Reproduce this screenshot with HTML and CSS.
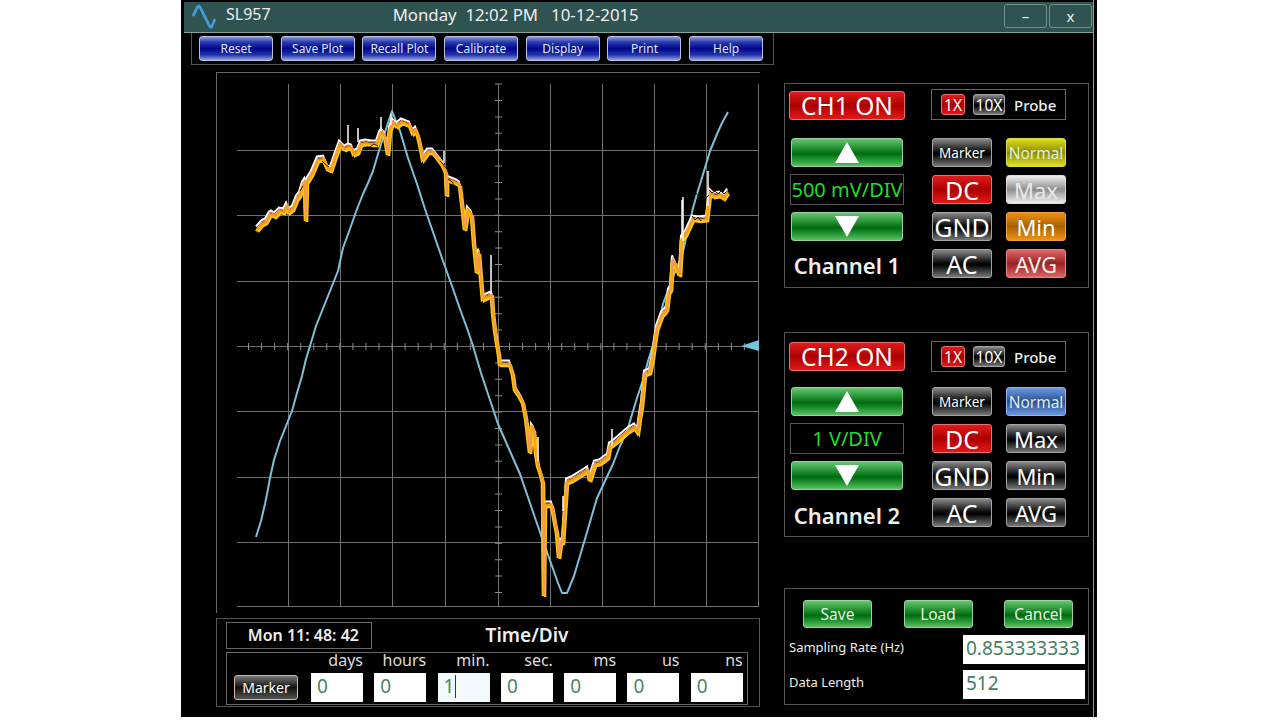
FILE: index.html
```html
<!DOCTYPE html>
<html lang="en">
<head>
    <meta charset="UTF-8">
    <meta name="viewport" content="width=device-width, initial-scale=1.0">
    <title>SL957</title>
    <link rel="stylesheet" href="styles.css">
</head>
<body>

    <div class="window">
        <div class="titlebar">
            <svg class="logo" width="24" height="28" viewBox="0 0 24 28">
                <path d="M1 14 L5.5 5 Q6.5 3 8 5 L17 23 Q19 27 20 24 L23 17" fill="none" stroke="#3f9bd5" stroke-width="2.8"/>
            </svg>
            <span class="app-name">SL957</span>
            <span class="clock">Monday&nbsp; 12:02 PM &nbsp; 10-12-2015</span>
            <div class="window-buttons">
                <div class="window-button">–</div>
                <div class="window-button">x</div>
            </div>
        </div>

        <div class="content">
            <div class="left">
                <div class="toolbar">
                    <div class="btn btn-blue">Reset</div>
                    <div class="btn btn-blue">Save Plot</div>
                    <div class="btn btn-blue">Recall Plot</div>
                    <div class="btn btn-blue">Calibrate</div>
                    <div class="btn btn-blue">Display</div>
                    <div class="btn btn-blue">Print</div>
                    <div class="btn btn-blue">Help</div>
                </div>

                <svg class="plot" width="544" height="541" viewBox="216 71 544 541">
                    <defs>
                        <polyline id="trace" points="257,228 262,222 266,220 270,213 272,212 275,214 280,209 284,210 287,204 289,210 293,207 297,197 300,193 303,183 305,180 306,218 307,180 312,172 318,158 324,157 328,167 331,168 335,156 340,142 345,147 349,145 352,146 354,152 358,150 361,142 366,141 372,142 377,142 380,133 382,130 385,134 388,152 390,128 393,120 397,124 402,120 407,122 410,123 413,131 416,128 418,133 421,146 423,157 428,150 433,150 437,155 443,163 446,170 447,193 447,177 452,179 457,181 460,183 462,200 465,227 468,208 472,213 474,240 477,270 479,250 481,275 483,297 487,295 492,293 493,310 495,327 497,340 499,352 500,362 510,362 513,372 515,387 519,393 523,400 526,415 530,450 532,425 534,428 536,450 538,463 541,472 543,480 544,593 545,503 547,503 552,503 555,520 557,530 559,555 561,540 563,540 565,510 567,480 572,478 580,473 585,470 588,468 590,478 595,462 600,461 608,455 610,444 612,443 618,438 627,430 635,425 638,430 640,415 642,403 645,372 650,370 653,355 655,340 657,327 662,313 665,310 667,307 669,290 671,287 673,257 676,264 680,273 682,237 686,232 693,217 700,218 707,217 709,200 710,190 714,194 720,193 724,196 728,190"/>
                    </defs>
                    <rect class="frame" x="216.5" y="71.5" width="544" height="545"/>
                    <path class="grid" d="M288.5 83V605M340.5 83V605M392.5 83V605M445.5 83V605M550.5 83V605M602.5 83V605M654.5 83V605M706.5 83V605M758.5 83V605"/>
                    <path class="grid" d="M237 149.5H759M237 214.5H759M237 280.5H759M237 345.5H759M237 410.5H759M237 476.5H759M237 541.5H759M237 605.5H759"/>
                    <path class="grid" d="M498.5 83V605"/>
                    <line class="ticks-x" x1="248" y1="345.5" x2="759" y2="345.5"/>
                    <line class="ticks-y" x1="498.5" y1="82.6" x2="498.5" y2="605"/>

                    <polyline class="trace-blue" points="256,536 261,520 265,503 268,488 270,477 274,459 280,440 286,425 292,410 297,392 302,375 306,358 310,345 316,325 322,310 330,290 338,270 343,247 351,225 357,208 363,193 368,182 373,170 378,153 383,137 388,122 392,110 400,130 408,157 417,183 425,208 434,234 443,260 452,285 460,308 468,330 473,345 481,372 487,390 493,408 498,423 509,448 520,473 532,508 543,540 552,565 558,582 562,592 567,592 574,575 585,538 597,497 605,480 613,463 620,445 627,430 637,397 644,376 648,360 655,338 663,303 672,278 682,255 693,207 697,193 704,170 710,150 717,133 722,122 728,111"/>
                    <polygon class="marker" points="741,345 759,339 759,350"/>

                    <use href="#trace" class="trace-white" x="-1" y="-2.5"/>
                    <use href="#trace" class="trace-yellow" x="1" y="3"/>
                    <use href="#trace" class="trace-yellow" x="-1" y="2"/>
                    <use href="#trace" class="trace-orange" y="1"/>
                    <use href="#trace" class="trace-salmon" y="-1"/>
                    <path class="spikes" d="M348 142V124M358 141V127M381 130V116M391 124V113M444 162V150M491 293V254M538 460V436M683 240V196M682 237V199M708 205V170M563 510V495M612 445V428"/>
                    <path class="trace-dark" d="M696 192l3 4 3-3 4 4 3-3M709 189l3 3 3-2 3 3 3-3 3 3 2-2M692 215l3 4 3-3 3 4M440 160l3 3 3 4M448 178l4 3 3 4M300 190l3-5M370 146l4-3 4 2M322 160l4 4 3 2"/>
                </svg>

                <div class="time-panel">
                    <div class="time-top">
                        <div class="time-now">Mon 11: 48: 42</div>
                        <div class="time-title">Time/Div</div>
                    </div>
                    <div class="time-grid">
                        <div></div>
                        <div class="unit">days</div>
                        <div class="unit">hours</div>
                        <div class="unit">min.</div>
                        <div class="unit">sec.</div>
                        <div class="unit">ms</div>
                        <div class="unit">us</div>
                        <div class="unit">ns</div>
                        <div class="btn btn-marker">Marker</div>
                        <div class="field">0</div>
                        <div class="field">0</div>
                        <div class="field field-active">1<span class="caret"></span></div>
                        <div class="field">0</div>
                        <div class="field">0</div>
                        <div class="field">0</div>
                        <div class="field">0</div>
                    </div>
                </div>
            </div>

            <div class="side">
                <div class="panel">
                    <div class="channel">
                        <div class="btn btn-red btn-channel">CH1 ON</div>
                        <div class="btn btn-green btn-step"><span class="arrow-up"></span></div>
                        <div class="division">500 mV/DIV</div>
                        <div class="btn btn-green btn-step"><span class="arrow-down"></span></div>
                        <div class="channel-name">Channel 1</div>
                    </div>
                    <div class="controls">
                        <div class="probe">
                            <div class="btn btn-red btn-probe">1X</div>
                            <div class="btn btn-dark btn-probe btn-probe-wide">10X</div>
                            <span class="probe-label">Probe</span>
                        </div>
                        <div class="modes">
                            <div class="btn btn-dark btn-small">Marker</div>
                            <div class="btn btn-yellow btn-normal">Normal</div>
                            <div class="btn btn-red btn-large">DC</div>
                            <div class="btn btn-white">Max</div>
                            <div class="btn btn-dark btn-large">GND</div>
                            <div class="btn btn-orange">Min</div>
                            <div class="btn btn-dark btn-large">AC</div>
                            <div class="btn btn-rose">AVG</div>
                        </div>
                    </div>
                </div>

                <div class="panel panel-two">
                    <div class="channel">
                        <div class="btn btn-red btn-channel">CH2 ON</div>
                        <div class="btn btn-green btn-step"><span class="arrow-up"></span></div>
                        <div class="division">1 V/DIV</div>
                        <div class="btn btn-green btn-step"><span class="arrow-down"></span></div>
                        <div class="channel-name">Channel 2</div>
                    </div>
                    <div class="controls">
                        <div class="probe">
                            <div class="btn btn-red btn-probe">1X</div>
                            <div class="btn btn-dark btn-probe btn-probe-wide">10X</div>
                            <span class="probe-label">Probe</span>
                        </div>
                        <div class="modes">
                            <div class="btn btn-dark btn-small">Marker</div>
                            <div class="btn btn-sky btn-normal">Normal</div>
                            <div class="btn btn-red btn-large">DC</div>
                            <div class="btn btn-dark">Max</div>
                            <div class="btn btn-dark btn-large">GND</div>
                            <div class="btn btn-dark">Min</div>
                            <div class="btn btn-dark btn-large">AC</div>
                            <div class="btn btn-dark">AVG</div>
                        </div>
                    </div>
                </div>

                <div class="panel panel-settings">
                    <div class="settings-buttons">
                        <div class="btn btn-green btn-setting">Save</div>
                        <div class="btn btn-green btn-setting">Load</div>
                        <div class="btn btn-green btn-setting">Cancel</div>
                    </div>
                    <div class="setting-row">
                        <span>Sampling Rate (Hz)</span>
                        <div class="field field-wide">0.853333333</div>
                    </div>
                    <div class="setting-row">
                        <span>Data Length</span>
                        <div class="field field-wide">512</div>
                    </div>
                </div>
            </div>
        </div>
    </div>

</body>
</html>
```

FILE: styles.css
```css
body {
    font-family: "Noto Sans", "Open Sans", sans-serif;
    margin: 0;
    background: #fff;
    color: #eee;
}
.window {
    width: 916px;
    height: 717px;
    margin-left: 181px;
    background: #000;
    padding-top: 2px;
    box-sizing: border-box;
    box-shadow: inset -3px 0 0 #000, inset -4px 0 0 #999;
    overflow: hidden;
}

/* title bar */
.titlebar {
    height: 30px;
    margin: 0 4px 0 3px;
    background: #2f5350;
    border-bottom: 1px solid #86a09e;
    display: flex;
    align-items: center;
    position: relative;
}
.logo {
    margin: 0 0 2px 8px;
}
.app-name {
    margin: 0 0 6px 10px;
    font-size: 16px;
}
.clock {
    margin: 0 0 6px 122px;
    font-size: 16.8px;
    white-space: nowrap;
}
.window-buttons {
    margin: 0 1px 2px auto;
    display: flex;
    gap: 2px;
}
.window-button {
    box-sizing: border-box;
    width: 43px;
    height: 24px;
    border: 1px solid #6f8f8c;
    border-radius: 3px;
    text-align: center;
    font-size: 15px;
    line-height: 22px;
}

.content {
    display: grid;
    grid-template-columns: 603px 305px;
}

/* buttons */
.btn {
    box-sizing: border-box;
    border-radius: 3px;
    border: 1px solid #aaa;
    display: flex;
    align-items: center;
    justify-content: center;
    white-space: nowrap;
    color: #fff;
    font-size: 22px;
    height: 29px;
}
.btn-large {
    font-size: 25px;
}
.btn-blue {
    width: 74px;
    height: 25px;
    font-size: 12px;
    color: #dfe6f5;
    border-color: #b3c0e0;
    background: linear-gradient(#8a9ad8, #2c3cb0 22%, #00078c 50%, #2434ac 78%, #96a4e0);
}
.btn-green {
    border-color: #94d49f;
    background: linear-gradient(#68c472, #2f9a3c 28%, #006a10 55%, #2a9c38 80%, #5cc066);
}
.btn-red {
    border-color: #e87070;
    background: linear-gradient(#e01c1c, #ac0000 50%, #e41818);
}
.btn-dark {
    border-color: #a4a4a4;
    background: linear-gradient(#8a8a8a, #111 45%, #000 55%, #777);
}
.btn-yellow {
    border-color: #dcdc50;
    background: linear-gradient(#dede20, #8c8c00 50%, #e0e020);
}
.btn-sky {
    border-color: #8fb4ea;
    background: linear-gradient(#6d9ade, #2c4d96 50%, #6a98de);
}
.btn-white {
    color: #e8e8e8;
    border-color: #ddd;
    background: linear-gradient(#eee, #8d8d8d 50%, #eee);
}
.btn-orange {
    border-color: #eaa040;
    background: linear-gradient(#ee9014, #a86000 50%, #f09216);
}
.btn-rose {
    border-color: #e88;
    background: linear-gradient(#e06666, #992222 50%, #e06464);
    color: #eee;
}
.btn-small {
    font-size: 13.5px;
}
.btn-normal {
    font-size: 15.5px;
    color: #dfeee0;
}
.btn-marker {
    width: 64px;
    height: 25px;
    margin-top: 2px;
    font-size: 14px;
    border-color: #d8b6a0;
    background: linear-gradient(#777, #111 50%, #555);
}

/* left side */
.left {
    padding: 0 0 0 10px;
}
.toolbar {
    width: 583px;
    height: 32px;
    box-sizing: border-box;
    border: 1px solid #555;
    border-top: none;
    padding: 3px 0 0 7px;
    display: flex;
    gap: 7.7px;
}
.plot {
    display: block;
    margin: 7px 0 0 25px;
}
.frame {
    fill: none;
    stroke: #666;
}
.grid {
    fill: none;
    stroke: #707070;
    stroke-width: 1;
}
.ticks-x {
    stroke: #8a8a8a;
    stroke-width: 7;
    stroke-dasharray: 1 12.05;
}
.ticks-y {
    stroke: #8a8a8a;
    stroke-width: 7;
    stroke-dasharray: 1 15.4;
}
.trace-blue {
    fill: none;
    stroke: #7fc0d8;
    stroke-width: 2;
    stroke-linejoin: round;
}
.marker {
    fill: #78c4dc;
}
.trace-white {
    fill: none;
    stroke: #fff;
    stroke-width: 2;
}
.trace-yellow {
    fill: none;
    stroke: #ffc80a;
    stroke-width: 2.6;
}
.trace-orange {
    fill: none;
    stroke: #f79a14;
    stroke-width: 2.2;
}
.trace-salmon {
    fill: none;
    stroke: #ef9a78;
    stroke-width: 1;
}
.spikes {
    fill: none;
    stroke: #f4eeee;
    stroke-width: 1.6;
}
.trace-dark {
    fill: none;
    stroke: #2a1c00;
    stroke-width: 1;
}

/* time/div box */
.time-panel {
    width: 544px;
    height: 89px;
    box-sizing: border-box;
    margin: 5px 0 0 25px;
    border: 1px solid #555;
    padding: 3px 0 0 9px;
}
.time-top {
    display: flex;
    align-items: center;
}
.time-now {
    width: 146px;
    height: 27px;
    box-sizing: border-box;
    border: 1px solid #666;
    padding-right: 12px;
    text-align: right;
    font-size: 16px;
    font-weight: 600;
    line-height: 24px;
}
.time-title {
    width: 310px;
    height: 27px;
    text-align: center;
    font-size: 19px;
    font-weight: 600;
    line-height: 27px;
}
.time-grid {
    width: 522px;
    height: 53px;
    box-sizing: border-box;
    margin-top: 3px;
    border: 1px solid #666;
    padding-left: 7px;
    display: grid;
    grid-template-columns: 65.7px repeat(7, 52px);
    grid-template-rows: 20px 29px;
    column-gap: 11.3px;
}
.unit {
    text-align: right;
    font-size: 16px;
    line-height: 15px;
    color: #ddd;
}
.field {
    box-sizing: border-box;
    background: #fff;
    color: #4a8466;
    font-size: 19px;
    line-height: 27px;
    padding-left: 6px;
    height: 29px;
}
.field-active {
    background: #f3fafd;
}
.caret {
    display: inline-block;
    width: 1px;
    height: 23px;
    margin-left: 1px;
    background: #334;
    vertical-align: -5px;
}

/* right side */
.side {
    padding-top: 50px;
}
.panel {
    box-sizing: border-box;
    width: 305px;
    height: 205px;
    border: 1px solid #555;
    padding-left: 5px;
    display: flex;
}
.panel-two {
    margin-top: 44px;
}
.channel {
    width: 114px;
    padding-top: 7px;
}
.btn-channel {
    width: 116px;
    margin-left: -1px;
    font-size: 24.5px;
    margin-bottom: 18px;
}
.panel-two .btn-channel {
    margin-top: 2px;
    margin-bottom: 16px;
}
.btn-step {
    width: 112px;
    margin-left: 1px;
}
.arrow-up {
    border-left: 12px solid transparent;
    border-right: 12px solid transparent;
    border-bottom: 21px solid #fff;
}
.arrow-down {
    border-left: 12px solid transparent;
    border-right: 12px solid transparent;
    border-top: 21px solid #fff;
}
.division {
    box-sizing: border-box;
    height: 31px;
    margin: 7px 0;
    border: 1px solid #555;
    text-align: center;
    white-space: nowrap;
    color: #20dc2c;
    font-size: 20px;
    line-height: 29px;
}
.channel-name {
    margin-top: 9px;
    text-align: center;
    font-size: 22px;
    font-weight: 600;
}
.panel-two .channel-name {
    margin-top: 10px;
}
.controls {
    width: 135px;
    margin-left: 27px;
    padding-top: 5px;
}
.probe {
    box-sizing: border-box;
    height: 31px;
    margin-bottom: 18px;
    border: 1px solid #666;
    display: flex;
    align-items: center;
    padding-left: 9px;
}
.panel-two .probe {
    margin-top: 3px;
    margin-bottom: 15px;
}
.btn-probe {
    width: 24px;
    height: 21px;
    font-size: 15.5px;
}
.btn-probe-wide {
    width: 32px;
    margin-left: 8px;
}
.probe-label {
    margin-left: 9px;
    font-size: 15px;
    font-weight: 500;
}
.modes {
    display: grid;
    grid-template-columns: 60px 60px;
    grid-auto-rows: 29px;
    gap: 8px 14px;
    margin-left: 1px;
}

/* settings box */
.panel-settings {
    margin-top: 51px;
    height: 117px;
    display: block;
    padding: 11px 3px 0 4px;
}
.settings-buttons {
    display: flex;
    justify-content: space-between;
    padding: 0 12px 0 14px;
    margin-bottom: 7px;
}
.btn-setting {
    width: 69px;
    height: 28px;
    font-size: 15.5px;
    color: #e6f2e6;
}
.setting-row {
    display: flex;
    justify-content: space-between;
    height: 29px;
    margin-bottom: 6px;
    font-size: 13px;
    line-height: 24px;
}
.field-wide {
    width: 122px;
    overflow: hidden;
    white-space: nowrap;
    padding-left: 3px;
    font-size: 19px;
    color: #3f7f5f;
}
```
